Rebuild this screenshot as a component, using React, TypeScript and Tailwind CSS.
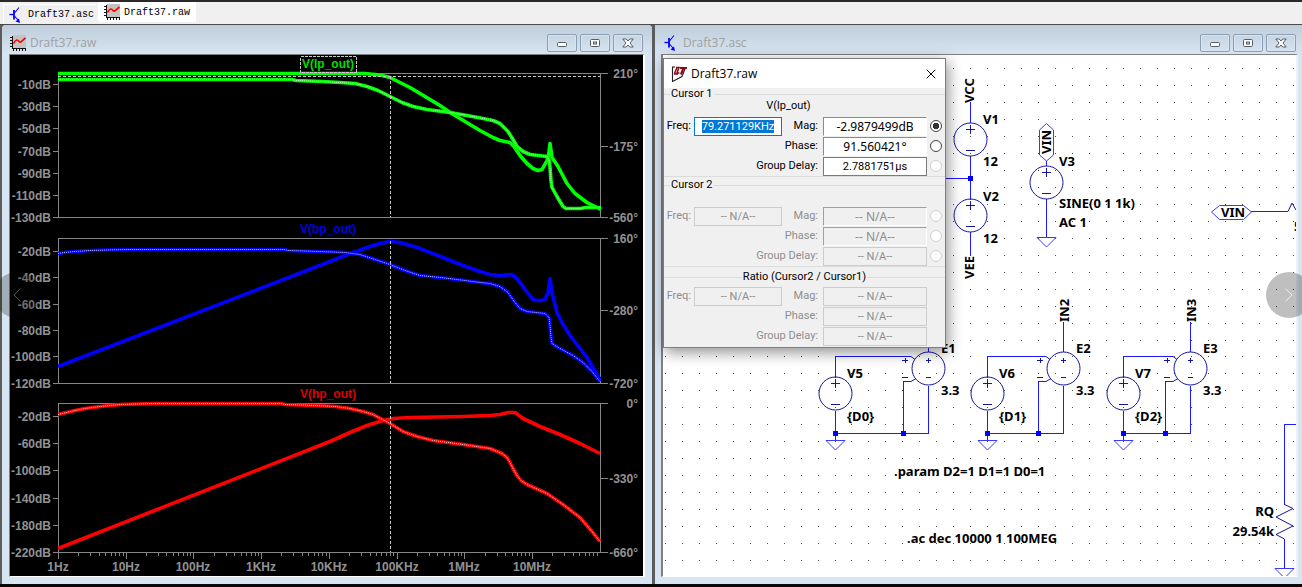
import { useEffect, useRef } from "react";
import type { ReactNode } from "react";
import { ChevronLeft, ChevronRight, X } from "lucide-react";

type Pane = {
  name: string;
  color: string;
  top: number;
  bottom: number;
  left: [string, number][];
  right: [string, number][];
  mag: string;
  phase: string;
};

const panes: Pane[] = [
  {
    name: "V(lp_out)",
    color: "#00ff00",
    top: 73,
    bottom: 217,
    left: [
      ["-10dB", 84],
      ["-30dB", 106],
      ["-50dB", 128],
      ["-70dB", 151],
      ["-90dB", 173],
      ["-110dB", 195],
      ["-130dB", 217],
    ],
    right: [
      ["210°", 73],
      ["-175°", 146],
      ["-560°", 217],
    ],
    mag: "58,73 365,73 375,74 382,75 390,77 398,81 410,87 425,96 440,105 450,112 465,121 480,130 493,137 500,140 510,142 514,146 520,155 527,163 533,168 538,170 542,169 547,160 549,152 550,143 552,157 558,166 567,183 575,193 587,202 601,209",
    phase:
      "58,79 292,79 296,80 322,81 340,82 355,83 367,86 378,90 390,96 402,102 413,106 427,109 450,112 467,115 483,118 493,120 500,123 508,131 513,139 517,146 523,151 530,154 547,156 549,159 550,167 551,180 552,187 557,196 563,206 566,208 580,208 586,207 601,207",
  },
  {
    name: "V(bp_out)",
    color: "#0000ff",
    top: 238,
    bottom: 383,
    left: [
      ["-20dB", 251],
      ["-40dB", 277],
      ["-60dB", 304],
      ["-80dB", 330],
      ["-100dB", 356],
      ["-120dB", 383],
    ],
    right: [
      ["160°", 238],
      ["-280°", 310],
      ["-720°", 383],
    ],
    mag: "58,366 330,261 350,253 370,246 380,243 390,241 400,242 417,247 443,257 463,265 480,271 490,274 500,275 512,274 517,278 525,289 533,299 537,300 541,300 545,299 548,292 550,278 552,292 557,312 562,322 570,335 587,357 600,379",
    phase:
      "58,253 64,252 75,251 90,250 126,249 284,249 288,250 320,251 345,252 360,254 375,259 390,264 405,270 420,275 440,277 465,280 480,282 490,283 500,286 508,292 515,302 520,308 527,311 545,313 549,317 550,325 551,337 552,343 560,348 573,355 583,362 592,371 600,381",
  },
  {
    name: "V(hp_out)",
    color: "#ff0000",
    top: 403,
    bottom: 552,
    left: [
      ["-20dB", 416],
      ["-60dB", 443],
      ["-100dB", 470],
      ["-140dB", 498],
      ["-180dB", 525],
      ["-220dB", 552],
    ],
    right: [
      ["0°", 403],
      ["-330°", 478],
      ["-660°", 552],
    ],
    mag: "58,548 330,441 350,432 367,425 383,420 393,418 410,417 463,416 490,415 500,414 508,412 515,412 523,418 540,426 560,434 580,443 600,453",
    phase:
      "58,414 75,410 85,408 100,406 120,404 155,403 281,403 285,404 315,405 335,406 350,408 363,411 373,414 390,423 403,431 417,436 433,440 463,444 490,448 502,453 507,457 510,462 513,468 517,475 521,480 527,484 547,493 563,504 580,517 592,531 600,541",
  },
];

const freqs = ["1Hz", "10Hz", "100Hz", "1KHz", "10KHz", "100KHz", "1MHz", "10MHz"];
const DECADE = 67.7;
const minorTicks = freqs.flatMap((_, d) =>
  [2, 3, 4, 5, 6, 7, 8, 9].map((n) => Math.round(58 + DECADE * (d + Math.log10(n)))),
);

function ScopeIcon() {
  return (
    <svg viewBox="0 0 16 16" className="size-4 shrink-0" aria-hidden="true">
      <rect x="3" y="0" width="13" height="13" fill="#c3c3c3" />
      <path d="M2.5 0.5v13M2 13.5h14M0 2.5h3M0 5.5h3M0 8.5h3M0 11.5h3M3.5 13v3M6.5 13v3M9.5 13v3M12.5 13v3M15.5 13v3" stroke="#111" fill="none" shapeRendering="crispEdges" />
      <path d="M3.500 8.500C6 4 7.500 4.500 9 6.500S12 5.500 15.500 3" stroke="#f00" strokeWidth="1.6" fill="none" />
    </svg>
  );
}

function TransistorIcon() {
  return (
    <svg viewBox="0 0 16 16" className="size-4 shrink-0" aria-hidden="true">
      <path d="M1.500 7.500h4.500" stroke="#00f" strokeWidth="1.300" />
      <path d="M6 3v9.500" stroke="#00f" strokeWidth="1.800" />
      <path d="M6.500 6l4.500-5.500M6.500 9l4 4.500" stroke="#00f" strokeWidth="1.100" />
      <path d="M12 16l-4.500-1.500 3.500-3z" fill="#00f" />
    </svg>
  );
}

function LtIcon() {
  return (
    <svg viewBox="0 0 16 16" className="size-4 shrink-0" aria-hidden="true">
      <path d="M1.500 1v14.500L11 10.500 14.500 1.500" fill="#fff" stroke="#222" strokeWidth="1.100" />
      <path d="M1 1h3" stroke="#222" strokeWidth="1.100" />
      <path d="M5 1.500h3L6 7h2.500M3.500 7.500L6 1.500M3 8h4" stroke="#8b0a14" strokeWidth="1.500" fill="none" />
      <path d="M9 2h7M12.500 2l-2.500 6.500" stroke="#8b0a14" strokeWidth="2.200" fill="none" />
    </svg>
  );
}

function WindowButtons() {
  const cls =
    "flex h-[18px] w-[30px] items-center justify-center rounded-xs border border-[#8c9db4] shadow-[inset_0_0_0_1px_#d9e4f0]";
  return (
    <div className="ml-auto flex gap-[3px]">
      <button type="button" aria-label="Minimize" className={cls}>
        <svg viewBox="0 0 12 12" className="size-3">
          <rect x="1.500" y="5.500" width="9" height="4" rx="1" fill="#fff" stroke="#565c68" />
        </svg>
      </button>
      <button type="button" aria-label="Restore" className={cls}>
        <svg viewBox="0 0 12 12" className="size-3">
          <rect x="1.500" y="2.500" width="9" height="7" rx="1" fill="#fff" stroke="#565c68" />
          <rect x="4.500" y="5" width="3" height="2" fill="#c8d4e2" stroke="#565c68" />
        </svg>
      </button>
      <button type="button" aria-label="Close" className={cls}>
        <svg viewBox="0 0 12 12" className="size-3">
          <path d="M0.800 2h3.400L6 4l1.800-2h3.400L8 6l3.200 4H7.800L6 8l-1.800 2H0.800L4 6z" fill="#fff" stroke="#565c68" />
        </svg>
      </button>
    </div>
  );
}

function Trace({ points, color, dotted }: { points: string; color: string; dotted?: boolean }) {
  return (
    <g fill="none" strokeLinejoin="round">
      <polyline points={points} stroke={color} strokeWidth="3.6" />
      {dotted && (
        <polyline points={points} stroke="#fff" strokeOpacity="0.8" strokeWidth="1" strokeDasharray="1 1" />
      )}
    </g>
  );
}

function Waveforms() {
  return (
    <svg
      viewBox="10 55 633 521"
      className="block h-auto w-full bg-black font-['Liberation_Sans',sans-serif] text-[12px] font-bold"
      role="img"
      aria-label="Bode plots"
    >
      {panes.map((p) => (
        <g key={p.name}>
          <g stroke="#858585" fill="none" shapeRendering="crispEdges" transform="translate(0.5 0.5)">
            <rect x="58" y={p.top} width="542" height={p.bottom - p.top} />
            {p.left.map(([label, y]) => (
              <path key={label} d={`M52 ${y}h6`} />
            ))}
            {p.right.map(([label, y]) => (
              <path key={label} d={`M600 ${y}h7`} />
            ))}
          </g>
          <g fill="#929292" textAnchor="end">
            {p.left.map(([label, y]) => (
              <text key={label} x="51" y={y + 5}>
                {label}
              </text>
            ))}
            {p.right.map(([label, y]) => (
              <text key={label} x="638" y={y + 5}>
                {label}
              </text>
            ))}
          </g>
          <g transform="translate(0 0.5)">
            <Trace points={p.mag} color={p.color} />
            <Trace points={p.phase} color={p.color} dotted />
          </g>
          <text x="328" y={p.top - 5} textAnchor="middle" fill={p.color} opacity="0.87">
            {p.name}
          </text>
          <path
            d={`M390.500 ${p.top + 3}V${p.bottom}`}
            stroke="#c8c8c8"
            strokeDasharray="3 2"
            shapeRendering="crispEdges"
          />
        </g>
      ))}
      {/* cursor level and the box round the attached trace */}
      <path d="M58 76.500H600" stroke="#c8c8c8" strokeDasharray="3 2" shapeRendering="crispEdges" />
      <rect x="300.500" y="56.500" width="56" height="16" fill="none" stroke="#c8c8c8" strokeDasharray="3 1" shapeRendering="crispEdges" />

      <g stroke="#858585" shapeRendering="crispEdges" transform="translate(0.5 0)">
        {minorTicks.map((x) => (
          <path key={x} d={`M${x} 553v3`} />
        ))}
        {freqs.map((f, i) => (
          <path key={f} d={`M${Math.round(58 + DECADE * i)} 553v6`} />
        ))}
      </g>
      <g fill="#929292" textAnchor="middle">
        {freqs.map((f, i) => (
          <text key={f} x={Math.round(58 + DECADE * i)} y="571">
            {f}
          </text>
        ))}
      </g>
    </svg>
  );
}

const PITCH = 16.97;
const dotCols = Array.from({ length: 38 }, (_, i) => Math.round(664.8 + PITCH * i));
const dotRows = Array.from({ length: 30 }, (_, i) => Math.round(68 + PITCH * i));

function Source({ x, y }: { x: number; y: number }) {
  return (
    <g stroke="#15159a" fill="none">
      <circle cx={x + 0.5} cy={y + 0.5} r="16.500" />
      <path d={`M${x - 4} ${y - 9.5}h9M${x + 0.5} ${y - 14}v9M${x - 4} ${y + 11.5}h9`} shapeRendering="crispEdges" />
    </g>
  );
}

function Ground({ x, y }: { x: number; y: number }) {
  return <path d={`M${x - 9} ${y + 0.5}h19l-9.5 9.500z`} stroke="#3a3aff" fill="none" />;
}

function Junction({ x, y }: { x: number; y: number }) {
  return <rect x={x - 2} y={y - 2} width="5" height="5" fill="#0000ff" />;
}

/* A bit input: the {Dn} source driving a 3.3x controlled source */
function Stage({ v, e, n, bit }: { v: number; e: number; n: number; bit: number }) {
  return (
    <g>
      <g stroke="#1a1aff" fill="none" shapeRendering="crispEdges">
        <path d={`M${v + 0.5} 378V356.500H${e - 17}M${v + 0.5} 411V440M${v + 0.5} 433.500H${e + 0.5}V386`} />
        <path d={`M${e - 17} 381.500H${e - 24.5}V433M${e + 0.5} 352V322`} />
      </g>
      <Source x={v} y={393} />
      <g stroke="#15159a" fill="none">
        <circle cx={e + 0.5} cy="368.500" r="16.500" />
        <path d={`M${e - 17} 356.500l4 3M${e - 17} 381.500l5-3`} />
        <g shapeRendering="crispEdges">
          <path d={`M${e - 2} 360.500h5M${e + 0.5} 358v5M${e - 2} 377.500h5`} />
          <path d={`M${e - 26} 360.500h6M${e - 22.5} 358v5M${e - 26} 377.500h6`} />
        </g>
      </g>
      <Junction x={v} y={433} />
      <Junction x={e - 25} y={433} />
      <Ground x={v} y={440} />
      <text x={v + 12} y="378">V{n + 4}</text>
      <text x={v + 12} y="421">{`{D${bit}}`}</text>
      <text x={e + 13} y="353">E{n}</text>
      <text x={e + 13} y="395">3.3</text>
      {n > 1 && (
        <text transform={`translate(${e + 6} 322) rotate(-90)`}>IN{n}</text>
      )}
    </g>
  );
}

function Schematic() {
  return (
    <svg
      viewBox="663 55 633 521"
      className="block h-auto w-full bg-white font-['Noto_Sans',sans-serif] text-[13px] font-bold"
      role="img"
      aria-label="Circuit schematic"
    >
      <g fill="#4a4a4a" shapeRendering="crispEdges">
        {dotRows.map((y) => dotCols.map((x) => <rect key={`${x}-${y}`} x={x} y={y} width="1" height="1" />))}
      </g>

      <g stroke="#1a1aff" fill="none" shapeRendering="crispEdges">
        <path d="M970.500 102V123M970.500 156V200M970.500 232V256M945 178.500H970" />
        <path d="M1046.500 161V166M1046.500 199V237" />
        <path d="M1251 211.500H1288" />
        <path d="M1296 424.500H1284.500V505M1284.500 539V568" />
      </g>
      <Source x={970} y={139} />
      <Source x={970} y={215} />
      <Source x={1046} y={182} />
      <Junction x={970} y={178} />
      <Ground x={1046} y={237} />
      <Ground x={1284} y={568} />
      <g stroke="#3a3aff" fill="#fff">
        <path d="M1046.500 123.500l7 6.500v25l-7 6-7-6v-25z" />
        <path d="M1211.500 212l8-6.500h24l8 6.500-8 7.500h-24z" />
      </g>
      <g stroke="#15159a" fill="none">
        <path d="M1288 211.500l4-8.500 4 7" />
        <path d="M1284.500 504.500l8.500 4-17 8.500 17 9-17 8.500 8.500 4.500" />
      </g>

      <Stage v={835} e={928} n={1} bit={0} />
      <Stage v={987} e={1063} n={2} bit={1} />
      <Stage v={1123} e={1190} n={3} bit={2} />

      <text transform="translate(974 103) rotate(-90)">VCC</text>
      <text transform="translate(974 279) rotate(-90)">VEE</text>
      <text transform="translate(1051 154) rotate(-90)">VIN</text>
      <text x="983" y="124">V1</text>
      <text x="983" y="166">12</text>
      <text x="983" y="201">V2</text>
      <text x="983" y="243">12</text>
      <text x="1059" y="166">V3</text>
      <text x="1059" y="208">SINE(0 1 1k)</text>
      <text x="1059" y="227">AC 1</text>
      <text x="1221" y="217">VIN</text>
      <text x="1294" y="231">5</text>
      <text x="894" y="476">.param D2=1 D1=1 D0=1</text>
      <text x="907" y="543">.ac dec 10000 1 100MEG</text>
      <text x="1274" y="516" textAnchor="end">RQ</text>
      <text x="1274" y="536" textAnchor="end">29.54k</text>
    </svg>
  );
}

const rowGrid = "grid grid-cols-[27px_88px_35px_104px_12px] items-center gap-x-[3px]";
const field = "h-[19px] w-full border px-0 text-center outline-none";
const flat = `${field} border-[#7a7a7a] bg-white`;
const sunken = `${field} border-[#8a8a8a] border-r-white border-b-white bg-white font-['Noto_Sans',sans-serif] text-[12px]`;
const flatOff = `${field} border-[#cccccc] bg-[#f0f0f0]`;
const sunkenOff = `${field} border-[#a0a0a0] border-r-white border-b-white bg-[#f0f0f0] font-['Noto_Sans',sans-serif] text-[12px]`;
const radio =
  "size-3 appearance-none rounded-full border border-[#444] bg-white checked:bg-[radial-gradient(#333_0_3px,#fff_3.5px)] disabled:border-[#d0d0d0]";

function Reading({
  id,
  label,
  value,
  className,
  children,
}: {
  id: string;
  label: string;
  value: string;
  className: string;
  children?: ReactNode;
}) {
  return (
    <>
      <label htmlFor={id} className="pr-0.5 text-right whitespace-nowrap">
        {label}
      </label>
      <input id={id} readOnly value={value} className={className} />
      {children ?? <span />}
    </>
  );
}

function CursorRows({ id, off, radios }: { id: string; off?: boolean; radios?: boolean }) {
  const freq = useRef<HTMLInputElement>(null);
  const na = "-- N/A--";

  useEffect(() => {
    if (!off) {
      freq.current?.focus();
      freq.current?.select();
    }
  }, [off]);

  const big = off ? (radios ? sunkenOff : flatOff) : sunken;
  const values = off ? [na, na, na, na] : ["79.271129KHz", "-2.9879499dB", "91.560421°", "2.7881751µs"];
  const dot = (name: string, checked?: boolean, disabled?: boolean) =>
    radios ? (
      <input
        type="radio"
        name={id}
        aria-label={name}
        defaultChecked={checked}
        disabled={disabled}
        className={radio}
      />
    ) : undefined;

  return (
    <>
      <div className={`${rowGrid} h-5`}>
        <label htmlFor={`${id}-freq`} className="text-right">
          Freq:
        </label>
        <input
          id={`${id}-freq`}
          ref={freq}
          readOnly
          value={values[0]}
          className={
            off ? flatOff : `${field} border-[#0078d7] bg-white selection:bg-[#0078d7] selection:text-white`
          }
        />
        <Reading id={`${id}-mag`} label="Mag:" value={values[1]} className={big}>
          {dot("Magnitude", !off, off)}
        </Reading>
      </div>
      <div className="grid h-5 grid-cols-[156px_104px_12px] items-center gap-x-[3px]">
        <Reading id={`${id}-phase`} label="Phase:" value={values[2]} className={big}>
          {dot("Phase", false, off)}
        </Reading>
      </div>
      <div className="grid h-5 grid-cols-[156px_104px_12px] items-center gap-x-[3px]">
        <Reading id={`${id}-delay`} label="Group Delay:" value={values[3]} className={off ? flatOff : flat}>
          {dot("Group delay", false, true)}
        </Reading>
      </div>
    </>
  );
}

function CursorDialog() {
  return (
    <section
      role="dialog"
      aria-label="Draft37.raw"
      className="absolute top-[33px] left-2 w-[283px] border border-[#7d7d7d] bg-[#f0f0f0] pb-px font-['Roboto',sans-serif] text-[11px] leading-3 text-black shadow-[2px_4px_14px_rgba(0,0,0,0.45)]"
    >
      <header className="flex h-[29px] items-center gap-1 bg-white pr-1.5 pl-[7px]">
        <LtIcon />
        <h2 className="font-['Open_Sans',sans-serif] text-[12px]">Draft37.raw</h2>
        <button type="button" aria-label="Close" className="ml-auto">
          <X className="size-4" strokeWidth={1.5} />
        </button>
      </header>
      <fieldset className="min-w-0 border-y border-[#dcdcdc]">
        <legend className="ml-1.5 px-px">Cursor 1</legend>
        <p className="h-4 pr-8 text-center">V(lp_out)</p>
        <CursorRows id="c1" radios />
      </fieldset>
      <fieldset disabled className="mt-0.5 min-w-0 border-y border-[#dcdcdc] pt-[15px] text-[#8e8e8e]">
        <legend className="ml-1.5 px-px text-black">Cursor 2</legend>
        <CursorRows id="c2" off radios />
      </fieldset>
      <fieldset disabled className="mt-1 min-w-0 border-t border-[#dcdcdc] pt-[3px] text-[#8e8e8e]">
        <legend className="mx-auto px-px text-black">Ratio (Cursor2 / Cursor1)</legend>
        <CursorRows id="ratio" off />
      </fieldset>
    </section>
  );
}

const titleBar =
  "flex h-[29px] items-center gap-1 bg-linear-to-b from-[#bfcddb] to-[#d7e4f2] pt-[6px] font-['Open_Sans',sans-serif] text-[12px] text-[#a0a0a0]";
const tab = "flex items-center gap-1 font-['Liberation_Mono',monospace] text-[10px] text-black";

export default function App() {
  return (
    <div className="relative overflow-hidden border-t-2 border-[#2b2829] bg-[#5c5c5e]">
      <nav role="tablist" className="flex h-[22px] gap-0.5 bg-[#f0f0f0] pl-[3px]">
        <button type="button" role="tab" aria-selected="false" className={`${tab} mt-0.5 border-t border-l border-white pr-0.5 pl-1`}>
          <TransistorIcon />
          Draft37.asc
        </button>
        <button type="button" role="tab" aria-selected="true" className={`${tab} h-5 bg-white px-1.5`}>
          <ScopeIcon />
          Draft37.raw
        </button>
      </nav>
      <main className="grid grid-cols-[650fr_647fr] gap-[3px] border-t border-b-3 border-t-[#4a4a4a] border-b-[#080808] pl-0.5">
        <section className="overflow-hidden rounded-t-sm bg-[#d7e4f2] px-[7px] pb-[7px]">
          <header className={`${titleBar} -mx-[7px] pr-[9px] pl-2`}>
            <ScopeIcon />
            <h1>Draft37.raw</h1>
            <WindowButtons />
          </header>
          <div className="border-t border-r-2 border-b border-l border-[#7f7f7f] border-r-white border-b-white">
            <Waveforms />
          </div>
        </section>
        <section className="relative rounded-t-sm bg-[#d7e4f2] pr-1 pb-[7px] pl-1.5">
          <header className={`${titleBar} -mr-1 -ml-1.5 pr-1.5 pl-2`}>
            <TransistorIcon />
            <h1>Draft37.asc</h1>
            <WindowButtons />
          </header>
          <div className="border-t border-r-2 border-b border-l-2 border-[#7f7f7f] border-r-[#eef2f6] border-b-white">
            <Schematic />
          </div>
          <CursorDialog />
        </section>
      </main>
      <button
        type="button"
        aria-label="Previous"
        className="absolute top-1/2 -left-1.5 flex size-[46px] -translate-y-1/2 items-center justify-center rounded-full bg-[#080808]/25 text-[#555]"
      >
        <ChevronLeft className="size-6" strokeWidth={1} />
      </button>
      <button
        type="button"
        aria-label="Next"
        className="absolute top-1/2 -right-2.5 flex size-[46px] -translate-y-1/2 items-center justify-center rounded-full bg-black/25 text-white/70"
      >
        <ChevronRight className="size-6" strokeWidth={1} />
      </button>
    </div>
  );
}
